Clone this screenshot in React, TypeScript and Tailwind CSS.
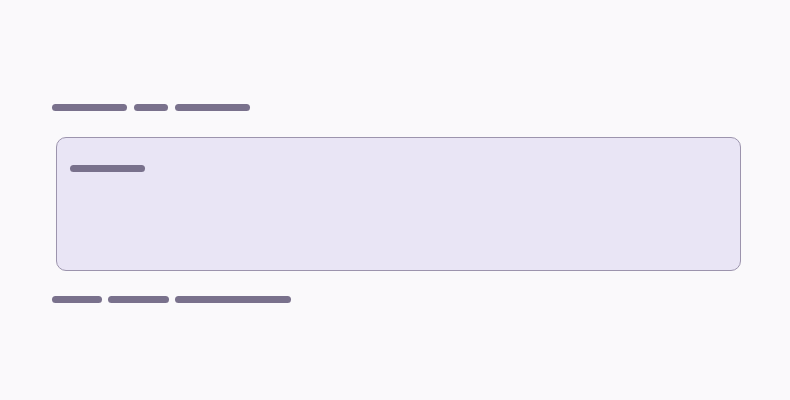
export default function App() {
  return (
    <div className="w-[790px] h-[400px] bg-[#faf9fb] pt-[104px] pl-[52px]">
      <div className="flex items-center gap-[7px]">
        <span className="h-[7px] w-[75px] rounded-full bg-[#79718c]"></span>
        <span className="h-[7px] w-[34px] rounded-full bg-[#79718c]"></span>
        <span className="h-[7px] w-[75px] rounded-full bg-[#79718c]"></span>
      </div>

      <div className="mt-[26px] ml-[4px] w-[685px] h-[134px] rounded-[10px] border border-[#9c94ad] bg-[#e9e5f5] pl-[13px] pt-[27px]">
        <p className="h-[7px] w-[75px] rounded-full bg-[#79718c]"></p>
      </div>

      <div className="mt-[25px] flex items-center gap-[6px]">
        <span className="h-[7px] w-[50px] rounded-full bg-[#79718c]"></span>
        <span className="h-[7px] w-[61px] rounded-full bg-[#79718c]"></span>
        <span className="h-[7px] w-[116px] rounded-full bg-[#79718c]"></span>
      </div>
    </div>
  );
}
